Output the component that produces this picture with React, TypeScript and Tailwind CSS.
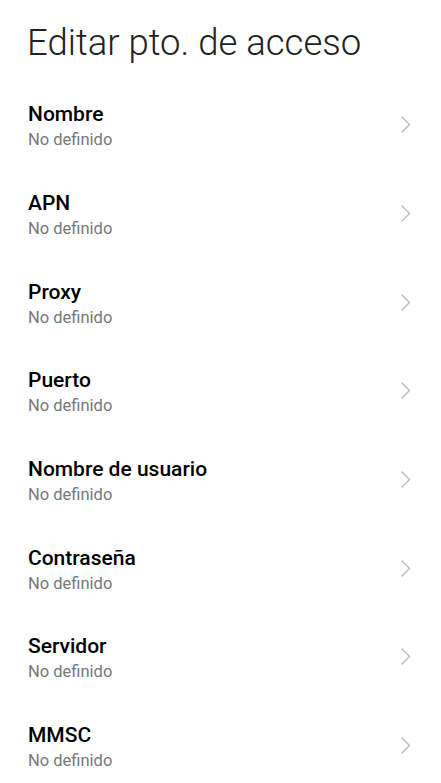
import React from 'react';

const fields = [
  'Nombre',
  'APN',
  'Proxy',
  'Puerto',
  'Nombre de usuario',
  'Contraseña',
  'Servidor',
  'MMSC',
];

function Chevron() {
  return (
    <svg width="10" height="17" viewBox="0 0 10 17" fill="none" className="mb-[3px] shrink-0">
      <path d="M1 1l7.5 7.5L1 16" stroke="#b8b8b8" strokeWidth="1.4" strokeLinecap="round" strokeLinejoin="round" />
    </svg>
  );
}

export default function App() {
  return (
    <div className="min-h-screen bg-white font-['Roboto',sans-serif]">
      <h1 className="pl-[27px] pt-[21px] text-[36.5px] leading-[43px] font-light text-[#222]">
        Editar pto. de acceso
      </h1>

      <div className="mt-[18px]">
        {fields.map((label) => (
          <div key={label} className="flex h-[88.7px] items-center justify-between pl-[28px] pr-[30px]">
            <div className="flex flex-col gap-[2px]">
              <span className="text-[21px] leading-[25px] font-medium text-black">{label}</span>
              <span className="text-[16.5px] leading-[21px] text-[#777]">No definido</span>
            </div>
            <Chevron />
          </div>
        ))}
      </div>
    </div>
  );
}
